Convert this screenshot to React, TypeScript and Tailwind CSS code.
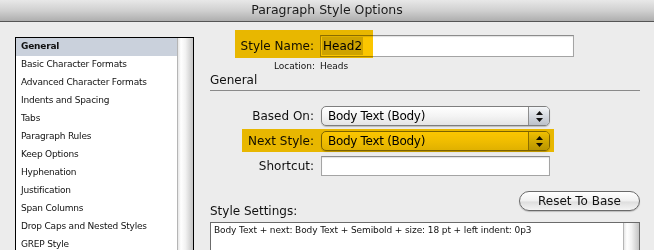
import React from "react";

const items = [
  "General",
  "Basic Character Formats",
  "Advanced Character Formats",
  "Indents and Spacing",
  "Tabs",
  "Paragraph Rules",
  "Keep Options",
  "Hyphenation",
  "Justification",
  "Span Columns",
  "Drop Caps and Nested Styles",
  "GREP Style",
];

function Scrollbar() {
  return (
    <div className="w-[16px] shrink-0 border-l border-[#b5b5b5] bg-[linear-gradient(to_right,#e6e6e6_0%,#ffffff_20%,#f2f2f2_50%,#c4c4c4_100%)]" />
  );
}

function Stepper() {
  return (
    <div className="flex w-[21px] flex-col items-center justify-center gap-[3px] rounded-r-[4px] border-l border-[#8e8e8e] bg-[linear-gradient(to_bottom,#f4f6f8_0%,#d6dae0_50%,#bcc1c9_100%)]">
      <svg width="7" height="4" viewBox="0 0 7 4">
        <path d="M3.5 0 L7 4 L0 4 Z" fill="#111" />
      </svg>
      <svg width="7" height="4" viewBox="0 0 7 4">
        <path d="M0 0 L7 0 L3.5 4 Z" fill="#111" />
      </svg>
    </div>
  );
}

function Select({ text }: { text: string }) {
  return (
    <div className="ml-[1px] flex h-[20px] w-[229px] items-stretch rounded-[5px] border border-[#7e7e7e] bg-[linear-gradient(to_bottom,#ffffff_0%,#f4f4f4_50%,#e4e4e4_100%)] shadow-[0_1px_1px_rgba(0,0,0,0.2)]">
      <div className="flex flex-1 items-center pl-[6px] text-[12px] leading-none tracking-[-0.3px] text-black">
        {text}
      </div>
      <Stepper />
    </div>
  );
}

function Label({ children }: { children: React.ReactNode }) {
  return (
    <div className="w-[104px] shrink-0 text-right text-[12px] leading-[15px] text-[#111]">
      {children}
    </div>
  );
}

export default function App() {
  return (
    <div className="relative h-[250px] w-[654px] overflow-hidden bg-[#ececec] font-['DejaVu_Sans',sans-serif] text-black">
      {/* Title bar */}
      <div className="flex h-[22px] items-center justify-center border-b border-[#555] bg-[linear-gradient(to_bottom,#e8e8e8_0%,#d0d0d0_50%,#aeaeae_100%)]">
        <span className="text-[12.5px] leading-none text-[#1a1a1a]">Paragraph Style Options</span>
      </div>

      <div className="flex">
        {/* Left list */}
        <div className="shrink-0 pl-[15px] pt-[15px]">
          <div className="flex h-[240px] w-[179px] border border-black bg-white">
            <div className="flex flex-1 flex-col">
              {items.map((it, i) => (
                <div
                  key={it}
                  className={
                    i === 0
                      ? "flex h-[18px] items-center bg-[#cad1dc] pl-[5px] text-[9px] font-bold tracking-[-0.2px] text-[#111]"
                      : "flex h-[18px] items-center pl-[5px] text-[9px] tracking-[-0.2px] text-[#111]"
                  }
                >
                  {it}
                </div>
              ))}
            </div>
            <Scrollbar />
          </div>
        </div>

        {/* Right form */}
        <div className="flex flex-1 flex-col pl-[16px] pr-[14px]">
          {/* Style Name */}
          <div className="relative mt-[13px] flex h-[22px] items-center gap-[6px]">
            <Label>Style Name:</Label>
            <div className="flex h-[22px] w-[254px] items-center border border-[#a4a4a4] border-t-[#8c8c8c] bg-white pl-[1px] shadow-[inset_0_1px_1px_rgba(0,0,0,0.12)]">
              <span className="flex h-[18px] items-center bg-[#d2d2d2] px-[1px] text-[12px] leading-none text-black">
                Head2
              </span>
            </div>
            <div className="pointer-events-none absolute left-[25px] top-[-5px] h-[28px] w-[138px] bg-[#fbc600] mix-blend-multiply" />
          </div>

          {/* Location */}
          <div className="mt-[4px] flex h-[11px] items-center gap-[5px] text-[9px] leading-[11px] text-[#111]">
            <div className="w-[105px] text-right">Location:</div>
            <div>Heads</div>
          </div>

          {/* General heading */}
          <div className="mt-[1px] h-[18px] border-b border-[#8a8a8a] text-[12px] leading-[15px] text-[#111]">
            General
          </div>

          {/* Based On */}
          <div className="mt-[15px] flex h-[20px] items-center gap-[6px]">
            <Label>Based On:</Label>
            <Select text="Body Text (Body)" />
          </div>

          {/* Next Style */}
          <div className="relative mt-[5px] flex h-[20px] items-center gap-[6px]">
            <Label>Next Style:</Label>
            <Select text="Body Text (Body)" />
            <div className="pointer-events-none absolute left-[32px] top-[-2px] h-[23px] w-[312px] bg-[#fbc600] mix-blend-multiply" />
          </div>

          {/* Shortcut */}
          <div className="mt-[5px] flex h-[20px] items-center gap-[6px]">
            <Label>Shortcut:</Label>
            <div className="ml-[1px] h-[20px] w-[229px] border border-[#a4a4a4] border-t-[#8c8c8c] bg-white shadow-[inset_0_1px_1px_rgba(0,0,0,0.12)]" />
          </div>

          {/* Reset + Style Settings label */}
          <div className="mt-[15px] flex h-[28px] justify-between">
            <div className="self-end text-[12px] leading-[15px] text-[#111]">Style Settings:</div>
            <div className="flex h-[20px] w-[121px] items-center justify-center self-start rounded-full border border-[#6a6a6a] bg-[linear-gradient(to_bottom,#ffffff_0%,#f0f0f0_50%,#dedede_55%,#f4f4f4_100%)] text-[12px] leading-none text-[#111] shadow-[0_1px_1px_rgba(0,0,0,0.2)]">
              Reset To Base
            </div>
          </div>

          {/* Style settings box */}
          <div className="mt-[3px] flex h-[40px] w-[430px] border border-[#6b6b6b] bg-white">
            <div className="flex-1 pl-[3px] pt-[2px] text-[9px] leading-[11px] tracking-[-0.1px] text-[#111]">
              Body Text + next: Body Text + Semibold + size: 18 pt + left indent: 0p3
            </div>
            <Scrollbar />
          </div>
        </div>
      </div>
    </div>
  );
}
